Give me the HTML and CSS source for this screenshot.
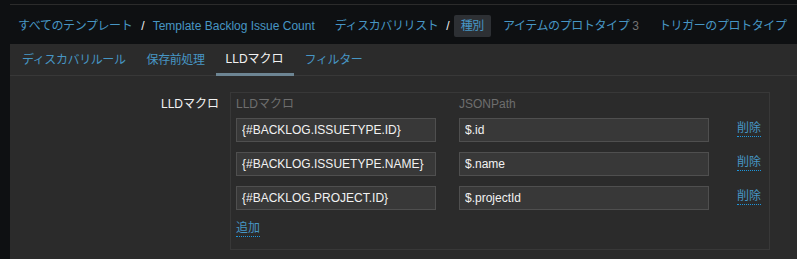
FILE: index.html
```html
<!DOCTYPE html>
<html lang="ja">
<head>
<meta charset="utf-8">
<title>LLDマクロ</title>
<link rel="stylesheet" href="styles.css">
</head>
<body>
<div class="page">
  <nav class="crumbs">
    <a class="crumb ja" href="#">すべてのテンプレート</a>
    <span class="sep">/</span>
    <a class="crumb" href="#">Template Backlog Issue Count</a>
    <a class="crumb ja gap" href="#">ディスカバリリスト</a>
    <span class="sep sep-tight">/</span>
    <span class="crumb ja selected">種別</span>
    <a class="crumb ja gap-s" href="#">アイテムのプロトタイプ</a><span class="count">3</span>
    <a class="crumb ja gap" href="#">トリガーのプロトタイプ</a>
  </nav>
  <div class="tabs">
    <a class="tab ja" href="#">ディスカバリルール</a>
    <a class="tab ja" href="#">保存前処理</a>
    <span class="tab active">LLDマクロ</span>
    <a class="tab ja" href="#">フィルター</a>
  </div>
  <div class="content">
    <div class="form-row">
      <div class="form-label">LLDマクロ</div>
      <div class="macro-box">
        <div class="macro-grid">
          <div class="head">LLDマクロ</div>
          <div class="head">JSONPath</div>
          <div></div>
          <input class="field" type="text" value="{#BACKLOG.ISSUETYPE.ID}">
          <input class="field" type="text" value="$.id">
          <div class="act"><a class="link" href="#">削除</a></div>
          <input class="field" type="text" value="{#BACKLOG.ISSUETYPE.NAME}">
          <input class="field" type="text" value="$.name">
          <div class="act"><a class="link" href="#">削除</a></div>
          <input class="field" type="text" value="{#BACKLOG.PROJECT.ID}">
          <input class="field" type="text" value="$.projectId">
          <div class="act"><a class="link" href="#">削除</a></div>
        </div>
        <div class="add-row"><a class="link" href="#">追加</a></div>
      </div>
    </div>
  </div>
</div>
</body>
</html>
```
FILE: styles.css
```css
* { box-sizing: border-box; }
html, body { margin: 0; padding: 0; }
body {
  background: #0e1012;
  font-family: "Liberation Sans", Arial, "Noto Sans CJK JP", sans-serif;
  font-size: 12px;
  color: #f2f2f2;
  overflow: hidden;
  height: 259px;
}
a { text-decoration: none; color: #4796c4; }
.ja { letter-spacing: -0.4px; }

.page {
  margin: 4px 0 0 10px;
  border-top: 1px solid #2b2b2b;
}

.crumbs {
  height: 39px;
  display: flex;
  align-items: center;
  padding: 3px 0 0 8px;
  white-space: nowrap;
}
.crumb { color: #4796c4; line-height: 22px; }
.sep { color: #f2f2f2; margin: 0 8px 0 9px; }
.sep-tight { margin: 0 4px 0 8px; }
.gap { margin-left: 20px; }
.gap-s { margin-left: 12px; }
.selected {
  background: #2d3034;
  border-radius: 2px;
  padding: 0 7px;
  height: 22px;
}
.count { color: #737373; margin-left: 3px; }

.tabs {
  background: #2b2b2b;
  height: 32px;
  border-bottom: 1px solid #383838;
  display: flex;
  padding-left: 2px;
  white-space: nowrap;
}
.tab {
  padding: 0 10px;
  line-height: 32px;
  height: 32px;
  color: #4796c4;
  margin-right: 1px;
}
.tab.active {
  color: #f2f2f2;
  border-bottom: 3px solid #6d8593;
  line-height: 31px;
}

.content {
  background: #2b2b2b;
  height: 183px;
  padding-top: 16px;
}
.form-row { display: flex; align-items: flex-start; }
.form-label {
  width: 209px;
  text-align: right;
  padding-top: 5px;
  line-height: 14px;
  margin-right: 11px;
  color: #f2f2f2;
}
.macro-box {
  width: 540px;
  border: 1px solid #383838;
  padding: 4px 8px 10px 5px;
}
.macro-grid {
  display: grid;
  grid-template-columns: 200px 250px auto;
  column-gap: 23px;
  row-gap: 10px;
}
.head {
  color: #6e6e6e;
  line-height: 14px;
  margin-bottom: -3px;
}
.field {
  height: 24px;
  background: #383838;
  border: 1px solid #4f4f4f;
  color: #f2f2f2;
  font: 12px "Liberation Sans", Arial, sans-serif;
  padding: 0 5px;
  margin: 0;
  outline: none;
}
.act { padding-left: 5px; display: flex; align-items: flex-start; padding-top: 2px; }
.link {
  color: #4796c4;
  line-height: 16px;
  border-bottom: 1px dotted #1e96dc;
  display: inline-block;
}
.add-row { margin-top: 10px; height: 19px; }
```
